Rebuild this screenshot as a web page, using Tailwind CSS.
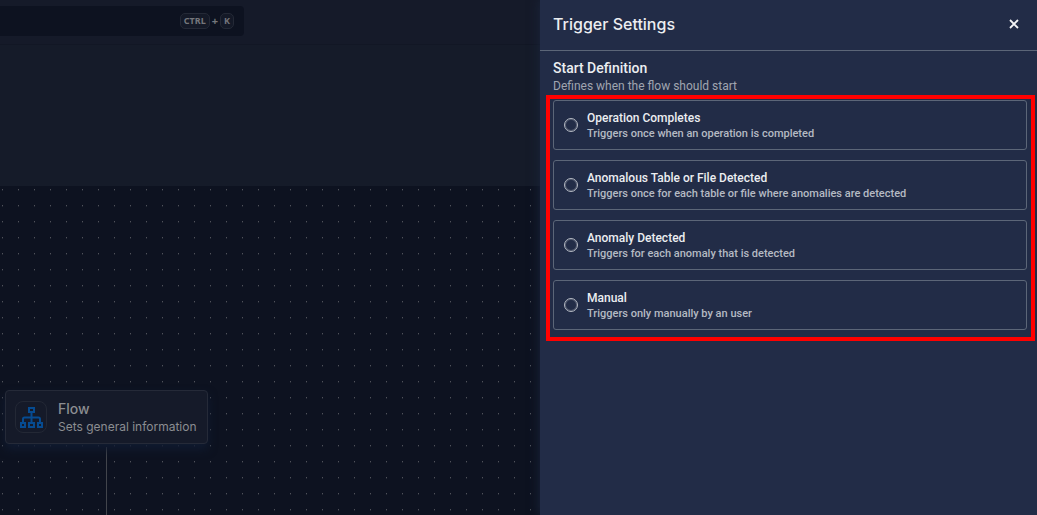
<!DOCTYPE html>
<html lang="en">
<head>
<meta charset="utf-8">
<meta name="viewport" content="width=device-width, initial-scale=1">
<title>Trigger Settings</title>
<script src="https://cdn.jsdelivr.net/npm/@tailwindcss/browser@4"></script>
</head>
<body class="flex min-h-screen overflow-hidden bg-[#0d1220] font-['Roboto','Liberation_Sans',sans-serif]">
  <main class="flex min-w-0 flex-1 flex-col">
    <header class="flex h-[45px] shrink-0 items-start border-b border-[#121725] bg-[#151a29] pt-1.5">
      <button type="button" class="flex h-[30px] w-[244px] items-center justify-end gap-0.5 rounded-r-[4px] bg-[#0d1220] pr-2.5 font-['Noto_Sans',sans-serif] text-[9px] font-bold text-[#74767c]">
        <kbd class="flex h-4 w-[30px] items-center justify-center rounded-[5px] border border-[#242936] bg-[#141927] font-['Noto_Sans',sans-serif]">CTRL</kbd>
        <span class="text-[11px]">+</span>
        <kbd class="flex h-4 w-3.5 items-center justify-center rounded-[5px] border border-[#242936] bg-[#141927] font-['Noto_Sans',sans-serif]">K</kbd>
      </button>
    </header>
    <section class="h-[141px] shrink-0 bg-[#151b29]"></section>
    <section class="relative flex-1 bg-[#0d1220]">
      <svg class="absolute inset-0 h-full w-full" aria-hidden="true">
        <defs><pattern id="dots" width="16" height="16" patternUnits="userSpaceOnUse"><rect x="2" y="3" width="1" height="1" fill="#50525a"/><rect x="2" y="4" width="1" height="1" fill="#252a36"/></pattern></defs>
        <rect width="100%" height="100%" fill="url(#dots)"/>
      </svg>
      <div class="absolute top-[261px] bottom-0 left-[106px] w-px bg-[#42454c]"></div>
      <article class="absolute top-[204px] left-[5px] flex h-[54px] w-[203px] items-center rounded-[4px] border border-[#252a38] bg-[#151a29] pl-[9px] shadow-[0_5px_10px_#101b31]">
        <span class="flex size-8 items-center justify-center rounded-[8px] border border-[#232835]">
          <svg class="h-[21px] w-[23px]" viewBox="0 0 23 21" fill="none" stroke="#064b91" stroke-width="2" aria-hidden="true">
            <path d="M9 1h5v4H9zM1 16h4v4H1zM9 16h5v4H9zM18 16h4v4h-4z"/>
            <path d="M11.500 5v11M3 16v-4q0-1.500 1.500-1.500h14q1.500 0 1.500 1.500v4"/>
          </svg>
        </span>
        <div class="ml-[11px] whitespace-nowrap font-['Inter',sans-serif] text-[#8b8d91]">
          <h2 class="text-sm leading-[18px] font-medium">Flow</h2>
          <p class="text-xs leading-[17px]">Sets general information</p>
        </div>
      </article>
    </section>
  </main>

  <aside class="relative w-[497px] shrink-0 bg-[#222c47] shadow-[0_0_10px_#1b263d]">
    <header class="flex h-[51px] items-center justify-between border-b border-[#5c6678] pr-[18px] pb-[3px] pl-[13px]">
      <h1 class="font-['Inter',sans-serif] text-base font-medium text-[#eceef1]">Trigger Settings</h1>
      <button type="button" aria-label="Close" class="text-[#f3f4f6]">
        <svg class="size-[10px]" viewBox="0 0 10 10" fill="none" stroke="currentColor" stroke-width="1.8" aria-hidden="true"><path d="M1 1l8 8M9 1L1 9"/></svg>
      </button>
    </header>
    <form>
      <div class="pt-2 pl-[13px]">
        <h2 class="text-sm leading-[18px] font-medium text-[#eceef1]">Start Definition</h2>
        <p class="text-xs leading-[18px] text-[#a0a5b0]">Defines when the flow should start</p>
      </div>
      <div role="radiogroup" aria-label="Start Definition" class="mr-0.5 ml-1.5 flex flex-col gap-2.5 border-4 border-[#ff0000] pt-px pr-1 pb-[7px] pl-[3px]">
        <label class="flex h-[50px] items-center gap-[9px] rounded-[3px] border border-[#5c6678] pl-2.5">
          <input type="radio" name="trigger" class="size-3.5 shrink-0 appearance-none rounded-full border border-[#b5bac3] ring-1 ring-[#b5bac3]/30 ring-inset checked:border-4">
          <span class="pt-0.5 whitespace-nowrap"><span class="block text-xs leading-[15px] font-medium text-[#eceef1]">Operation Completes</span><span class="block text-[11px] leading-[15px] font-medium text-[#b5bac3]">Triggers once when an operation is completed</span></span>
        </label>
        <label class="flex h-[50px] items-center gap-[9px] rounded-[3px] border border-[#5c6678] pl-2.5">
          <input type="radio" name="trigger" class="size-3.5 shrink-0 appearance-none rounded-full border border-[#b5bac3] ring-1 ring-[#b5bac3]/30 ring-inset checked:border-4">
          <span class="pt-0.5 whitespace-nowrap"><span class="block text-xs leading-[15px] font-medium text-[#eceef1]">Anomalous Table or File Detected</span><span class="block text-[11px] leading-[15px] font-medium text-[#b5bac3]">Triggers once for each table or file where anomalies are detected</span></span>
        </label>
        <label class="flex h-[50px] items-center gap-[9px] rounded-[3px] border border-[#5c6678] pl-2.5">
          <input type="radio" name="trigger" class="size-3.5 shrink-0 appearance-none rounded-full border border-[#b5bac3] ring-1 ring-[#b5bac3]/30 ring-inset checked:border-4">
          <span class="pt-0.5 whitespace-nowrap"><span class="block text-xs leading-[15px] font-medium text-[#eceef1]">Anomaly Detected</span><span class="block text-[11px] leading-[15px] font-medium text-[#b5bac3]">Triggers for each anomaly that is detected</span></span>
        </label>
        <label class="flex h-[50px] items-center gap-[9px] rounded-[3px] border border-[#5c6678] pl-2.5">
          <input type="radio" name="trigger" class="size-3.5 shrink-0 appearance-none rounded-full border border-[#b5bac3] ring-1 ring-[#b5bac3]/30 ring-inset checked:border-4">
          <span class="pt-0.5 whitespace-nowrap"><span class="block text-xs leading-[15px] font-medium text-[#eceef1]">Manual</span><span class="block text-[11px] leading-[15px] font-medium text-[#b5bac3]">Triggers only manually by an user</span></span>
        </label>
      </div>
    </form>
  </aside>
</body>
</html>
